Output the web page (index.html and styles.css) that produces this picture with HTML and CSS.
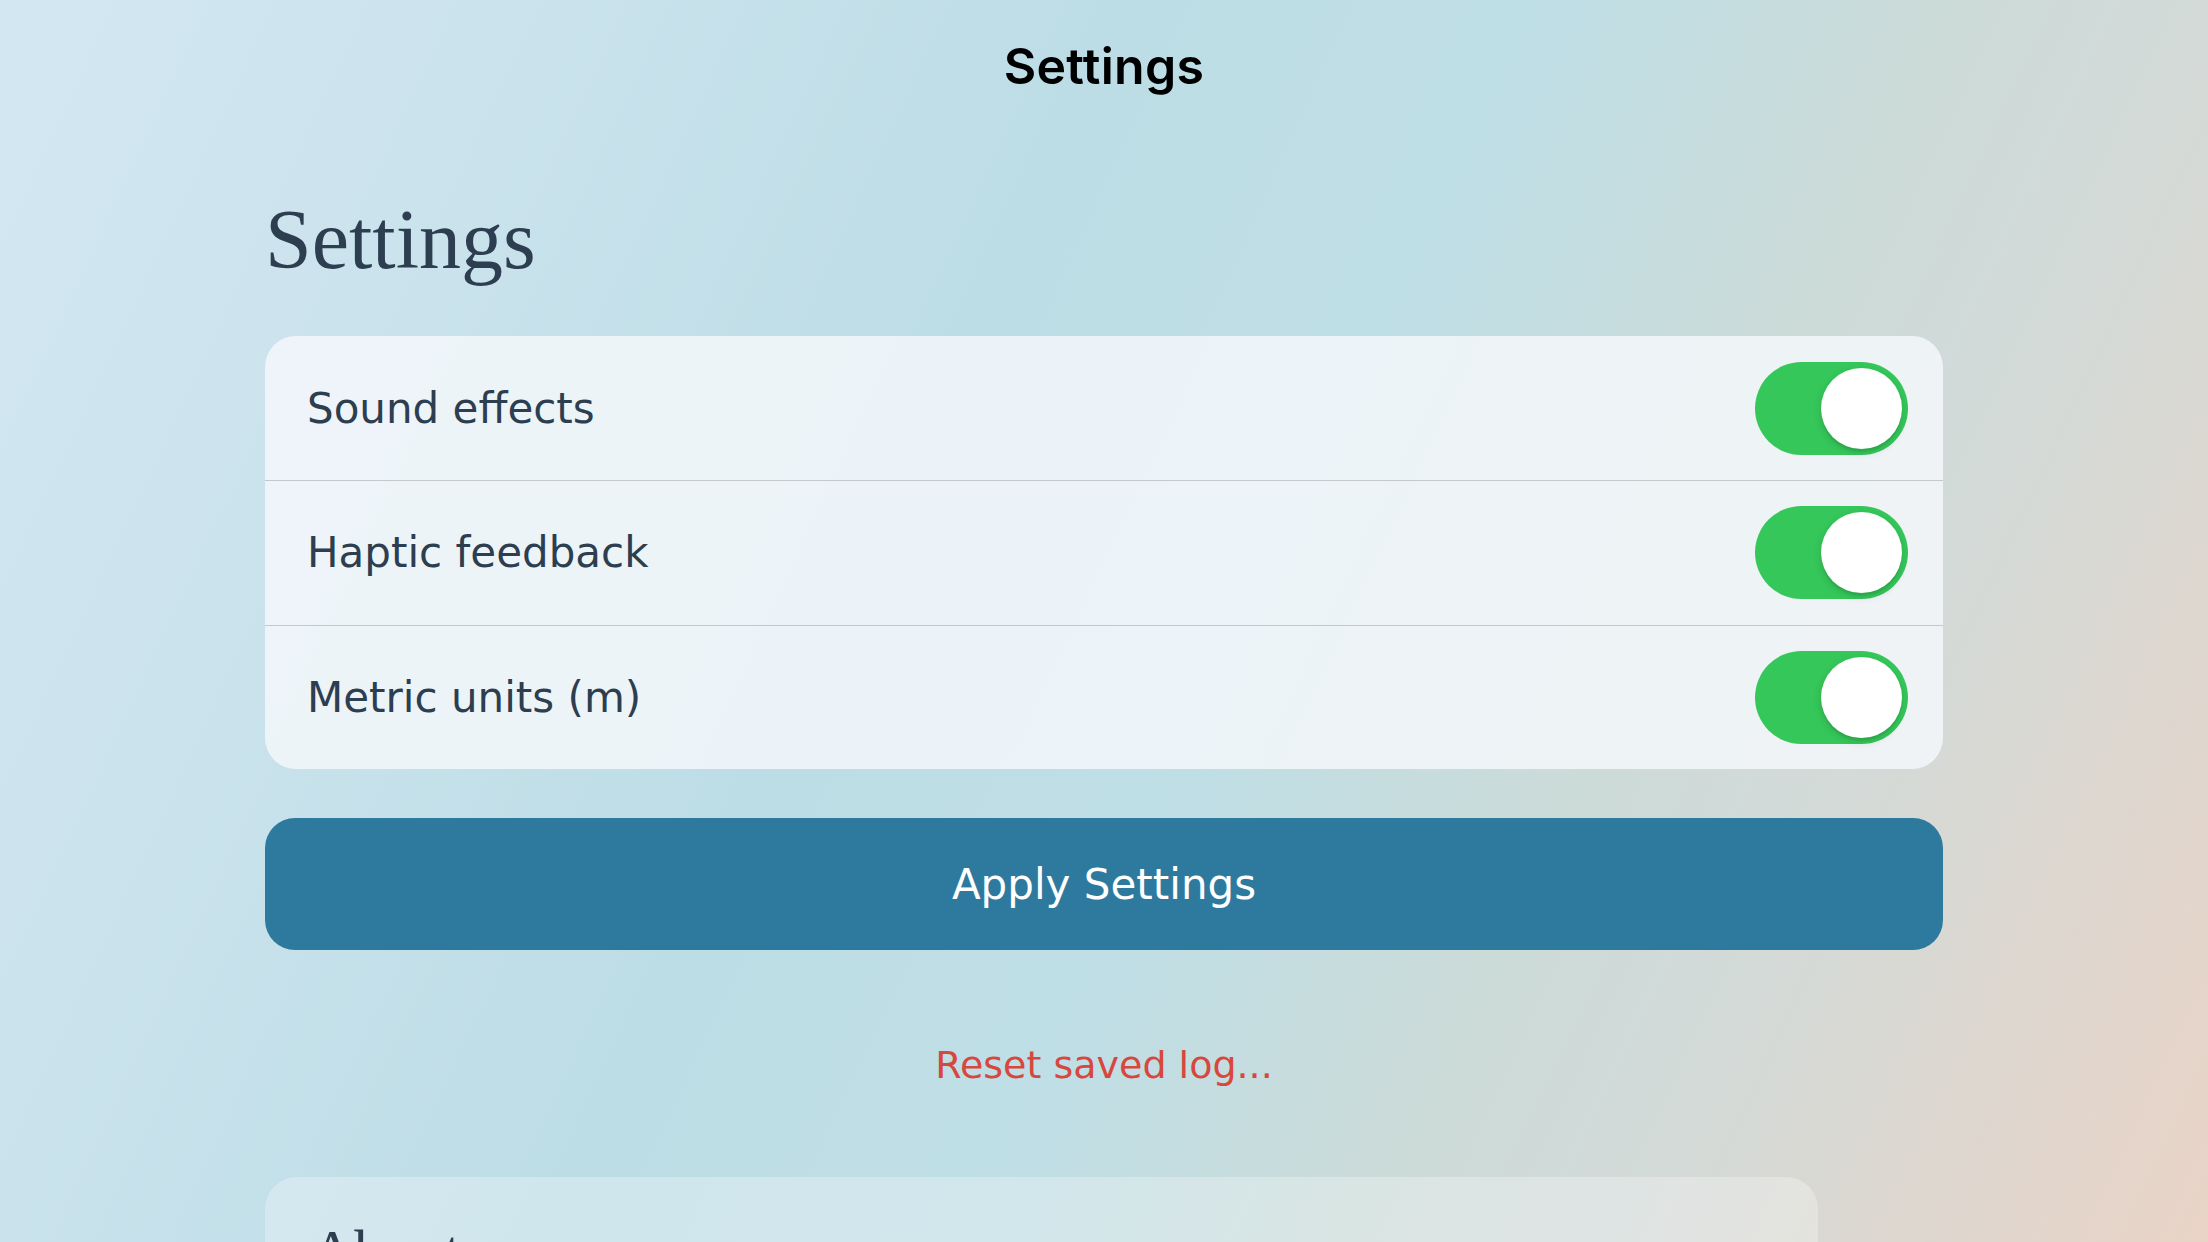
FILE: index.html
```html
<!DOCTYPE html>
<html lang="en">
<head>
<meta charset="utf-8">
<title>Settings</title>
<link rel="stylesheet" href="styles.css">
</head>
<body>
<header class="nav">
  <div class="nav-title">Settings</div>
</header>
<main class="content">
  <h1 class="page-title">Settings</h1>
  <section class="card">
    <div class="row">
      <span class="row-label">Sound effects</span>
      <span class="switch on" role="switch" aria-checked="true"><span class="knob"></span></span>
    </div>
    <div class="row">
      <span class="row-label">Haptic feedback</span>
      <span class="switch on" role="switch" aria-checked="true"><span class="knob"></span></span>
    </div>
    <div class="row">
      <span class="row-label">Metric units (m)</span>
      <span class="switch on" role="switch" aria-checked="true"><span class="knob"></span></span>
    </div>
  </section>
  <button class="primary-btn" type="button">Apply Settings</button>
  <div class="reset-wrap">
    <button class="link-btn" type="button">Reset saved log...</button>
  </div>
  <section class="about-card">
    <h2 class="about-title">About</h2>
  </section>
</main>
</body>
</html>
```
FILE: styles.css
```css
html, body {
  margin: 0;
  padding: 0;
  height: 100%;
  overflow: hidden;
}
body {
  background: linear-gradient(115deg,
    #d3e7f2 0%,
    #cbe3ed 18%,
    #bddde6 40%,
    #bfdee5 56%,
    #ccdbd8 70%,
    #d3dad8 79%,
    #dcd7d0 88%,
    #e9d3c6 100%);
  font-family: "DejaVu Sans", Verdana, sans-serif;
  color: #2c3e50;
}
.nav {
  height: 132px;
  display: flex;
  align-items: center;
  justify-content: center;
}
.nav-title {
  font-family: Inter, "Noto Sans", sans-serif;
  font-weight: 600;
  font-size: 50px;
  color: #000;
  letter-spacing: 0.3px;
}
.content {
  padding: 59px 265px 0;
  display: flex;
  flex-direction: column;
}
.page-title {
  margin: 0 0 47px;
  font-family: "Liberation Serif", "Times New Roman", serif;
  font-weight: 400;
  font-size: 84px;
  line-height: 98px;
  color: #2c3e50;
}
.card {
  background: rgba(243, 247, 250, 0.86);
  border-radius: 31px;
  overflow: hidden;
}
.row {
  box-sizing: border-box;
  height: 144px;
  display: flex;
  align-items: center;
  justify-content: space-between;
  padding: 0 35px 0 42px;
}
.row + .row {
  height: 144.5px;
  border-top: 1.5px solid #c3c8cc;
}
.row-label {
  font-size: 42px;
  color: #2c3e50;
}
.switch {
  position: relative;
  width: 153px;
  height: 93px;
  border-radius: 47px;
  background: #e4e6e8;
  flex: none;
}
.switch.on {
  background: #35c75a;
}
.knob {
  position: absolute;
  top: 6px;
  left: 6px;
  width: 81px;
  height: 81px;
  border-radius: 50%;
  background: #fff;
  box-shadow: 0 3px 8px rgba(0, 0, 0, 0.15), 0 3px 1px rgba(0, 0, 0, 0.06);
}
.switch.on .knob {
  left: 66px;
}
.primary-btn {
  margin-top: 49px;
  height: 132px;
  border: none;
  border-radius: 30px;
  background: #2e7a9e;
  color: #fff;
  font-family: "DejaVu Sans", Verdana, sans-serif;
  font-size: 42px;
  padding: 0;
}
.reset-wrap {
  display: flex;
  justify-content: center;
  margin-top: 92px;
}
.link-btn {
  border: none;
  background: none;
  padding: 0;
  font-family: "DejaVu Sans", Verdana, sans-serif;
  font-size: 38px;
  line-height: 46px;
  color: #d8473d;
}
.about-card {
  margin-top: 89px;
  margin-right: 125px;
  background: rgba(255, 255, 255, 0.28);
  border-radius: 32px;
  padding: 44px 46px 60px;
  min-height: 200px;
}
.about-title {
  margin: 0;
  font-family: "Liberation Serif", "Times New Roman", serif;
  font-weight: 400;
  font-size: 60px;
  line-height: 60px;
  color: #2c3e50;
}
```
